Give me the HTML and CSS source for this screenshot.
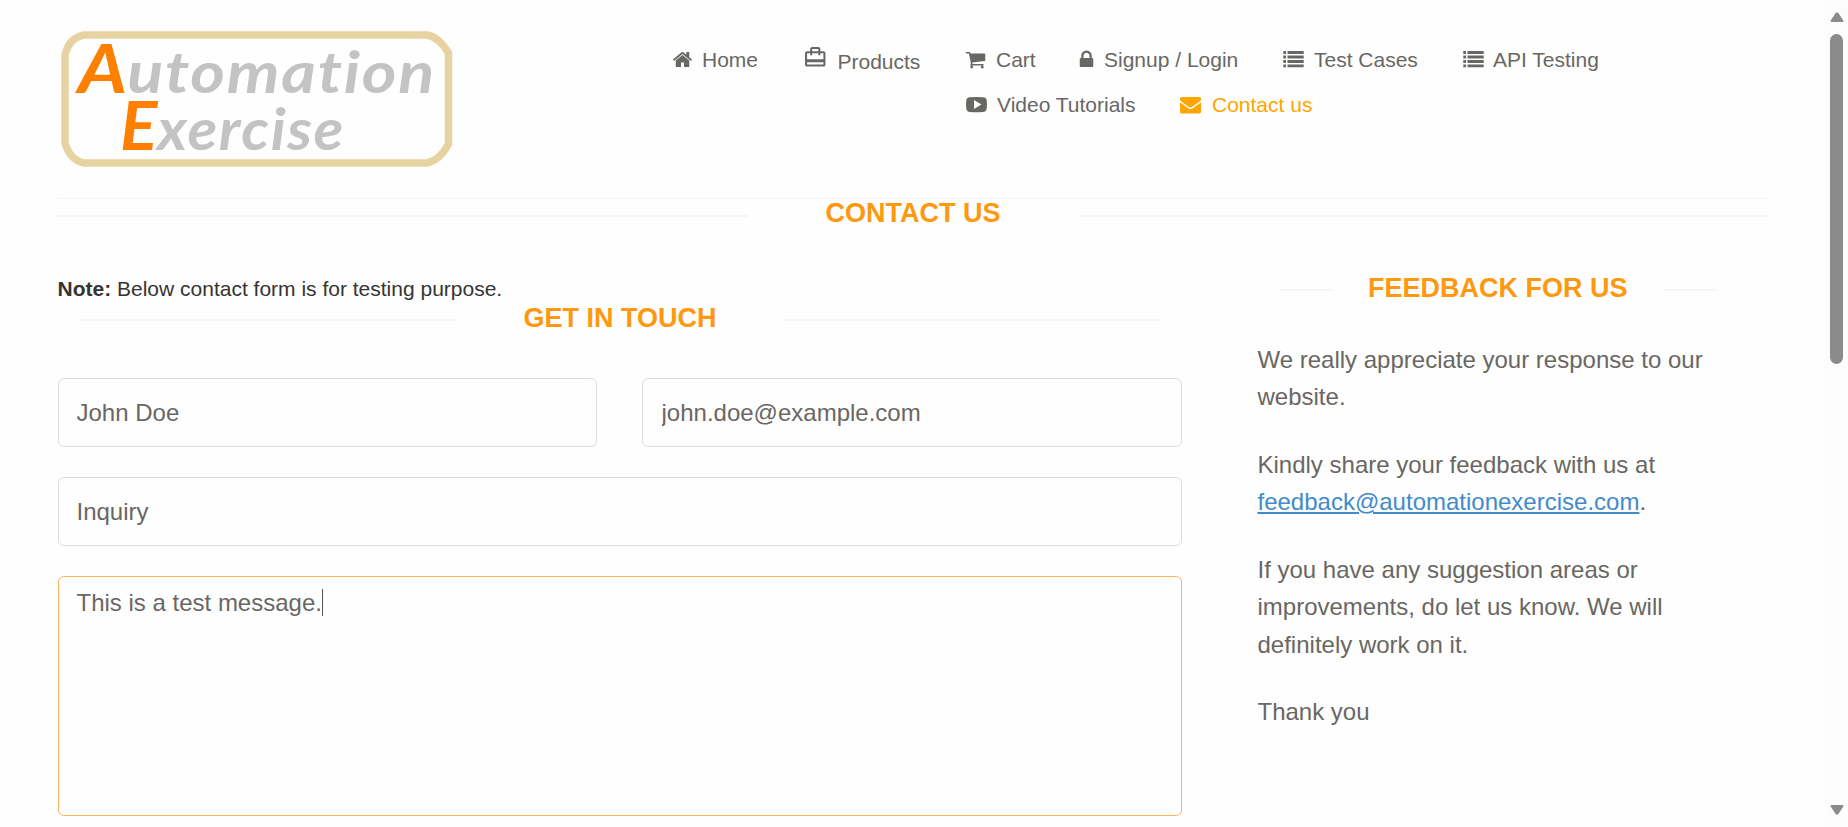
FILE: index.html
```html
<!DOCTYPE html>
<html lang="en">
<head>
<meta charset="utf-8">
<title>Automation Exercise - Contact Us</title>
<link rel="stylesheet" href="styles.css">
</head>
<body>
<svg class="defs" aria-hidden="true">
  <symbol id="i-home" viewBox="0 0 1792 1792"><path d="M1472 992v480q0 26-19 45t-45 19h-384v-384h-256v384h-384q-26 0-45-19t-19-45v-480q0-1 .5-3t.5-3l575-474 575 474q1 2 1 6zm223-69l-62 74q-8 9-21 11h-3q-13 0-21-7l-692-577-692 577q-12 8-24 7-13-2-21-11l-62-74q-8-10-7-23.5t11-21.5l719-599q32-26 76-26t76 26l244 204v-195q0-14 9-23t23-9h192q14 0 23 9t9 23v408l219 182q10 8 11 21.5t-7 23.5z"/></symbol>
  <symbol id="i-bag" viewBox="0 0 24 24"><path d="M20 6h-3V4c0-1.11-.89-2-2-2H9c-1.11 0-2 .89-2 2v2H4c-1.11 0-2 .89-2 2v11c0 1.11.89 2 2 2h16c1.11 0 2-.89 2-2V8c0-1.11-.89-2-2-2zM9 4h6v2H9V4zm11 15H4v-2h16v2zm0-5H4V8h3v2h2V8h6v2h2V8h3v6z"/></symbol>
  <symbol id="i-cart" viewBox="0 0 1792 1792"><path d="M704 1536q0 52-38 90t-90 38-90-38-38-90 38-90 90-38 90 38 38 90zm896 0q0 52-38 90t-90 38-90-38-38-90 38-90 90-38 90 38 38 90zm128-1088v512q0 24-16.5 42.5t-40.5 21.5l-1044 122q13 60 13 70 0 16-24 64h920q26 0 45 19t19 45-19 45-45 19h-1024q-26 0-45-19t-19-45q0-11 8-31.500t16-36 21.500-40 15.500-29.500l-177-823h-204q-26 0-45-19t-19-45 19-45 45-19h256q16 0 28.500 6.500t19.500 15.500 13 24.500 8 26 5.500 29.500 4.500 26h1201q26 0 45 19t19 45z"/></symbol>
  <symbol id="i-lock" viewBox="0 0 1792 1792"><path d="M640 768h512v-192q0-106-75-181t-181-75-181 75-75 181v192zm832 96v576q0 40-28 68t-68 28h-960q-40 0-68-28t-28-68v-576q0-40 28-68t68-28h32v-192q0-184 132-316t316-132 316 132 132 316v192h32q40 0 68 28t28 68z"/></symbol>
  <symbol id="i-list" viewBox="0 0 21 21"><path d="M.3 2H3v3H.3zM.3 6.500H3v3H.3zM.3 11H3v3H.3zM.3 15.500H3v2.700H.3zM4.500 2H20.700v3H4.500zM4.500 6.500H20.700v3H4.500zM4.500 11H20.700v3H4.500zM4.500 15.500H20.700v2.700H4.500z"/></symbol>
  <symbol id="i-video" viewBox="0 0 21 21"><path fill-rule="evenodd" d="M4 3.200Q10.500 2.600 17 3.200Q20.300 3.300 20.700 6.300Q21.200 10.500 20.700 14.700Q20.300 17.800 17 17.900Q10.500 18.400 4 17.900Q.7 17.800.3 14.700Q-.2 10.500.3 6.300Q.7 3.300 4 3.200ZM8 6.100V15L15.400 10.500Z"/></symbol>
  <symbol id="i-mail" viewBox="0 0 1792 1792"><path d="M1792 710v794q0 66-47 113t-113 47h-1472q-66 0-113-47t-47-113v-794q44 49 101 87 362 246 497 345 57 42 92.500 65.500t94.500 48 110 24.500h2q51 0 110-24.500t94.500-48 92.500-65.500q170-123 498-345 57-39 100-87zm0-294q0 79-49 151t-122 123q-376 261-468 325-10 7-42.500 31t-54 38.500-52 32.500-57.500 27-50 9h-2q-23 0-50-9t-57.500-27-52-32.500-54-38.500-42.500-31q-91-64-262-182.500t-205-142.500q-62-42-117-115.500t-55-136.500q0-78 41.500-130t118.500-52h1472q65 0 112.500 47t47.500 113z"/></symbol>
</svg>
<div class="page">
  <header class="header">
    <svg class="logo" viewBox="0 0 394 140" role="img" aria-label="Automation Exercise">
      <path class="logo-frame" d="M25 7H368Q380 9 389.500 25V116Q381 132 368 135H25Q11 132 6 115V27Q10 10 25 7Z"/>
      <text class="logo-text" x="19" y="65" textLength="358" lengthAdjust="spacingAndGlyphs"><tspan class="logo-cap">A</tspan>utomation</text>
      <text class="logo-text" x="61" y="122" textLength="225" lengthAdjust="spacingAndGlyphs"><tspan class="logo-cap">E</tspan>xercise</text>
    </svg>
    <nav class="nav">
      <ul class="nav-row">
        <li><svg class="icon home"><use href="#i-home"/></svg>Home</li>
        <li class="products"><svg class="icon bag"><use href="#i-bag"/></svg>Products</li>
        <li><svg class="icon cart"><use href="#i-cart"/></svg>Cart</li>
        <li><svg class="icon lock"><use href="#i-lock"/></svg>Signup / Login</li>
        <li><svg class="icon"><use href="#i-list"/></svg>Test Cases</li>
        <li><svg class="icon api"><use href="#i-list"/></svg>API Testing</li>
      </ul>
      <ul class="nav-row second">
        <li><svg class="icon video"><use href="#i-video"/></svg>Video Tutorials</li>
        <li class="active"><svg class="icon mail"><use href="#i-mail"/></svg>Contact us</li>
      </ul>
    </nav>
  </header>
  <main class="main">
    <h2 class="title title-page"><span>Contact Us</span></h2>
    <div class="columns">
      <section class="contact">
        <p class="note"><b>Note:</b> Below contact form is for testing purpose.</p>
        <h2 class="title title-form"><span>Get In Touch</span></h2>
        <form class="form">
          <input class="field" type="text" value="John Doe">
          <input class="field email" type="text" value="john.doe@example.com">
          <input class="field wide" type="text" value="Inquiry">
          <div class="field wide message">This is a test message.<i class="caret"></i></div>
        </form>
      </section>
      <aside class="feedback">
        <h2 class="title title-side"><span>Feedback For Us</span></h2>
        <p>We really appreciate your response to our website.</p>
        <p>Kindly share your feedback with us at <a href="#">feedback@automationexercise.com</a>.</p>
        <p>If you have any suggestion areas or improvements, do let us know. We will definitely work on it.</p>
        <p>Thank you</p>
      </aside>
    </div>
  </main>
</div>
<div class="scrollbar">
  <svg class="arrow" viewBox="0 0 14 10"><path d="M5.600 1Q7-.6 8.400 1L13.300 8.400Q14 10 12.500 10H1.500Q0 10 .7 8.400Z"/></svg>
  <div class="thumb"></div>
  <svg class="arrow down" viewBox="0 0 14 10"><path d="M5.600 9Q7 10.600 8.400 9L13.300 1.600Q14 0 12.500 0H1.500Q0 0 .7 1.600Z"/></svg>
</div>
</body>
</html>
```
FILE: styles.css
```css
* { box-sizing: border-box; }

body {
  margin: 0;
  display: flex;
  height: 827px;
  overflow: hidden;
  background: #fefefe;
  color: #696763;
  font-family: "Liberation Sans", Arial, sans-serif;
}

ul, h2, p { margin: 0; padding: 0; }
.defs { display: none; }

.page { flex: 1; padding: 0 57px 0 58px; }

/* Header */
.header {
  display: flex;
  height: 199px;
  padding-top: 28px;
  border-bottom: 1px solid #f3f3f3;
}
.logo { width: 394px; height: 140px; margin-left: 1px; }
.logo-frame { fill: none; stroke: #e7d2a2; stroke-width: 7.500px; }
.logo-text {
  font-family: Lato, sans-serif;
  font-size: 58px;
  font-style: italic;
  font-weight: 700;
  font-variant-ligatures: none;
  letter-spacing: 1.500px;
  fill: #c3c3c3;
}
.logo-cap { font-size: 66px; letter-spacing: 0; fill: #ff8000; }

.nav { margin: 17px 0 0 219px; font-size: 21px; line-height: 30px; }
.nav-row {
  display: grid;
  grid-template-columns: 131px 162px 111px 207px 180px auto;
  height: 45px;
  list-style: none;
}
.nav-row.second { grid-template-columns: 215px auto; margin-left: 293px; }
.nav-row li { display: flex; align-items: flex-start; white-space: nowrap; }
.nav-row .active { color: #ffa500; }
.nav-row .products { padding-top: 2px; }

.icon { width: 21px; height: 21px; margin: 4px 10px 0 0; fill: currentColor; }
.icon.home { margin-right: 9px; }
.icon.bag { width: 24.500px; height: 24.500px; margin: -2px 10px 0 0; }
.icon.lock { margin-right: 7px; }
.icon.api { margin-right: 9px; }
.icon.video { margin-left: 1px; }
.icon.mail { margin-right: 11px; }

/* Section titles */
.title {
  display: flex;
  justify-content: space-between;
  height: 30px;
  color: #fe980f;
  font-size: 27px;
  line-height: 30px;
  text-align: center;
  text-transform: uppercase;
  white-space: nowrap;
}
.title::before, .title::after {
  content: "";
  height: 2px;
  background: #f5f5f5;
}
.title-page { margin-top: -1px; }
.title-page::before, .title-page::after { width: 690px; margin-top: 17px; }

.columns { display: flex; }
.contact { width: 1124px; padding-top: 46px; }
.note { margin-left: -.5px; color: #363432; font-size: 21px; line-height: 30px; }
.title-form { margin-top: -1px; padding: 0 22px; }
.title-form::before, .title-form::after { width: 375px; margin-top: 16px; }

.form {
  display: grid;
  grid-template-columns: 539px 540px;
  gap: 30px 45px;
  margin-top: 45px;
}
.field {
  width: 100%;
  height: 69px;
  padding: 0 17.500px;
  border: 1px solid #ddd;
  border-radius: 6px;
  background: #fefefe;
  color: #696763;
  font: 24px "Liberation Sans", Arial, sans-serif;
}
.field.email { padding-left: 18.500px; }
.field.wide { grid-column: 1 / 3; }
.message {
  display: flex;
  height: 240px;
  padding-top: 9px;
  border-color: #fdb45e;
  line-height: 34px;
}
.caret { width: 1px; height: 27px; margin-top: 3px; background: #555; }

.feedback { width: 460px; margin-left: 75.500px; padding-top: 45px; font-size: 24px; line-height: 37.500px; }
.title-side { margin-bottom: 37.500px; padding: 0 2px 0 22.500px; }
.title-side::before, .title-side::after { width: 52.500px; margin-top: 16px; }
.feedback p { margin-bottom: 30px; }
.feedback a { color: #428bca; }

/* Scrollbar */
.scrollbar {
  display: flex;
  flex-direction: column;
  align-items: center;
  width: 23px;
  padding: 12px 0;
  background: #fcfcfc;
}
.arrow { width: 14px; height: 10px; fill: #8b8b8b; }
.arrow.down { margin-top: auto; }
.thumb { width: 13px; height: 330px; margin-top: 12px; border-radius: 7px; background: #8b8b8b; }
```
